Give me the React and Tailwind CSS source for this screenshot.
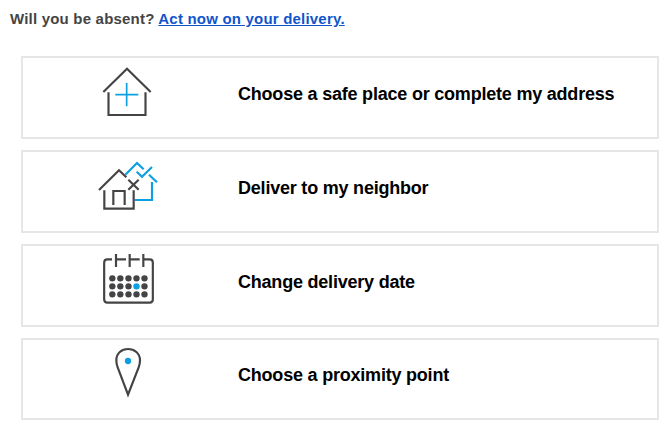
const DARK = '#444446';
const BLUE = '#0d9fdf';

function SafePlaceIcon() {
  return (
    <svg className="h-[67px] w-20 shrink-0" viewBox="0 9 240 201" fill="none" stroke={DARK} strokeWidth="6.500">
      <path d="M40 111 L111 41 L182 111" />
      <path d="M55.5 112 V180 H166.500 V112" />
      <path d="M110 84 V154 M76 119 H145" stroke={BLUE} strokeWidth="5" />
    </svg>
  );
}

function NeighborIcon() {
  return (
    <svg className="h-[67px] w-20 shrink-0" viewBox="0 6 240 201" fill="none" stroke={DARK} strokeWidth="6.500">
      <g stroke={BLUE}>
        <path d="M106 74 L141 39 L161 58" />
        <path d="M140 65 L156 80 L186 51" />
        <path d="M177 74 L201 97" />
        <path d="M186 96 V150 H134" />
      </g>
      <path d="M27 120 L87 61 L109 82" />
      <path d="M43 121 V176 H131 V121" />
      <path d="M70 165 V123 H104 V165" />
      <path d="M115 89 L146 119 M146 89 L115 119" />
    </svg>
  );
}

function CalendarIcon() {
  const columns = [67, 91, 115.5, 139.5, 163.5];
  const rows = [100, 124, 148];
  return (
    <svg className="h-[67px] w-20 shrink-0" viewBox="0 3 240 201" fill="none" stroke={DARK} strokeWidth="6.500">
      <path d="M66 43 H52 Q42.500 43 42.500 53 V163 Q42.500 173 52 173 H179 Q188.500 173 188.500 163 V53 Q188.500 43 179 43 H160" />
      <path d="M78 43 H108 M119 43 H149" />
      <path d="M78 27 V66 M119 27 V66 M160 27 V66" />
      {rows.map((y) =>
        columns.map((x) => (
          <circle key={`${x}-${y}`} cx={x} cy={y} r="9.500" stroke="none" fill={x === 139.5 && y === 124 ? BLUE : DARK} />
        ))
      )}
    </svg>
  );
}

function PinIcon() {
  return (
    <svg className="h-[67px] w-20 shrink-0" viewBox="0 6 240 201" fill="none" stroke={DARK} strokeWidth="6.500">
      <path d="M114 170 L83 88 C80 80 79 74 79 67 C79 46 95 33 114 33 C133 33 150 46 150 67 C150 74 149 80 146 88 Z" />
      <circle cx="114" cy="69" r="9.500" fill={BLUE} stroke="none" />
    </svg>
  );
}

function Option({ icon, label, height = 'h-[83px]', textClass }) {
  return (
    <a className={`flex border-2 border-[#e6e6e6] pl-[67px] ${height}`}>
      {icon}
      <span className={`text-[18px] leading-6 font-bold tracking-[-0.21px] whitespace-nowrap text-black ${textClass}`}>{label}</span>
    </a>
  );
}

export default function App() {
  return (
    <main className="h-[433px] w-[671px] overflow-hidden bg-white font-['Liberation_Sans',Arial,sans-serif]">
      <p className="h-14 pt-[9px] pl-[10px] text-[15px] leading-5 font-bold tracking-[0.2px] whitespace-nowrap text-[#444444]">
        Will you be absent? <a className="text-[#1155cc] underline">Act now on your delivery.</a>
      </p>
      <div className="mr-3 ml-[21px] flex flex-col gap-[11px]">
        <Option icon={<SafePlaceIcon />} label="Choose a safe place or complete my address" textClass="ml-[68px] mt-6" />
        <Option icon={<NeighborIcon />} label="Deliver to my neighbor" textClass="ml-[68px] mt-6" />
        <Option icon={<CalendarIcon />} label="Change delivery date" textClass="ml-[68px] mt-6" />
        <Option icon={<PinIcon />} label="Choose a proximity point" height="h-[82px]" textClass="ml-[68px] mt-[23px]" />
      </div>
    </main>
  );
}
